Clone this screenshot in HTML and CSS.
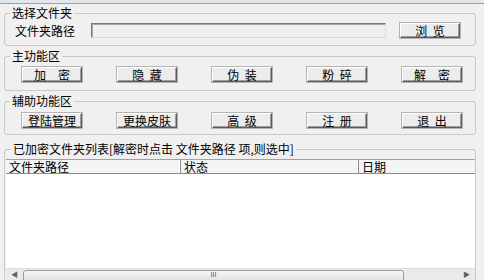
FILE: index.html
```html
<!DOCTYPE html>
<html lang="zh-CN">

<head>
    <meta charset="UTF-8">
    <meta name="viewport" content="width=device-width, initial-scale=1.0">
    <title>文件夹加密</title>
    <link rel="stylesheet" href="styles.css">
</head>

<body>
    <div class="frame-edge"></div>

    <fieldset class="group group-folder">
        <legend>选择文件夹</legend>
        <div class="path-row">
            <label for="path">文件夹路径</label>
            <input type="text" id="path" class="path-input" readonly>
            <button class="win-btn browse-btn">浏  览</button>
        </div>
    </fieldset>

    <fieldset class="group group-main">
        <legend>主功能区</legend>
        <div class="btn-row">
            <button class="win-btn">加　密</button>
            <button class="win-btn">隐  藏</button>
            <button class="win-btn">伪  装</button>
            <button class="win-btn">粉  碎</button>
            <button class="win-btn">解　密</button>
        </div>
    </fieldset>

    <fieldset class="group group-extra">
        <legend>辅助功能区</legend>
        <div class="btn-row">
            <button class="win-btn">登陆管理</button>
            <button class="win-btn">更换皮肤</button>
            <button class="win-btn">高  级</button>
            <button class="win-btn">注  册</button>
            <button class="win-btn">退  出</button>
        </div>
    </fieldset>

    <fieldset class="group group-list">
        <legend>已加密文件夹列表[解密时点击 文件夹路径 项,则选中]</legend>
        <div class="list-view">
            <div class="list-header">
                <div class="col col-path">文件夹路径</div>
                <div class="col col-state">状态</div>
                <div class="col col-date">日期</div>
            </div>
            <div class="list-body"></div>
            <div class="hscroll">
                <div class="arrow arrow-left">&#9664;</div>
                <div class="thumb"><span class="grip">III</span></div>
                <div class="track"></div>
                <div class="arrow arrow-right">&#9654;</div>
            </div>
        </div>
    </fieldset>
</body>

</html>
```

FILE: styles.css
```css
body {
    margin: 0;
    background-color: #f0f0f0;
    font-family: "Noto Sans CJK SC", "Liberation Sans", sans-serif;
    font-size: 12px;
    color: #000;
    overflow: hidden;
    height: 280px;
}

.frame-edge {
    height: 3px;
    background-color: #e3e6ec;
    border-bottom: 1px solid #a0a0a0;
}

.group {
    margin: 3px 8px 0 4px;
    padding: 0;
    border: 1px solid #c9c9c9;
    border-radius: 3px;
    min-width: 0;
}

.group legend {
    margin-left: 5px;
    padding: 0 2px;
    line-height: 14px;
    height: 14px;
}

.group-folder {
    margin-top: 2px;
    padding: 3px 0 7px;
}

.path-row {
    display: flex;
    align-items: center;
    height: 15px;
    padding-left: 10px;
}

.path-row label {
    width: 76px;
    line-height: 15px;
}

.path-input {
    width: 295px;
    height: 15px;
    box-sizing: border-box;
    margin: 0;
    padding: 0;
    background-color: #f0f0f0;
    border: 1px solid;
    border-color: #7a7a7a #dadada #dadada #7a7a7a;
    box-shadow: inset 1px 1px 0 #a8a8a8;
    outline: none;
}

.win-btn {
    width: 60px;
    height: 15px;
    margin: 0;
    padding: 0;
    box-sizing: border-box;
    background-color: #ececec;
    border: 1px solid;
    border-color: #ffffff #5a5a5a #5a5a5a #ffffff;
    box-shadow: inset -1px -1px 0 #a0a0a0, 0 0 0 1px #b4b4b4;
    font-family: "Noto Sans CJK SC", "Liberation Sans", sans-serif;
    font-size: 12px;
    line-height: 12px;
    color: #000;
    white-space: pre;
}

.browse-btn {
    margin-left: 14px;
}

.btn-row {
    display: grid;
    grid-template-columns: repeat(5, 60px);
    column-gap: 35px;
    padding-left: 17px;
}

.group-main {
    padding: 4px 0 8px;
}

.group-extra {
    padding: 5px 0 6px;
}

.group-list {
    margin-top: 7px;
    padding: 3px 0 0 1px;
}

.list-view {
    background-color: #fff;
}

.list-header {
    display: grid;
    grid-template-columns: 175px 178px 1fr;
    background-color: #f4f4f4;
    border-top: 1px solid #a0a0a0;
    border-bottom: 1px solid #8a8a8a;
    box-sizing: border-box;
    height: 15px;
}

.col {
    padding-left: 3px;
    line-height: 13px;
    border-right: 1px solid #8a8a8a;
    box-shadow: inset -1px 0 0 #fff;
}

.col-date {
    border-right: none;
    box-shadow: none;
}

.list-body {
    height: 94px;
}

.hscroll {
    display: flex;
    height: 17px;
    background-color: #eaeaea;
    border-top: 1px solid #dcdcdc;
}

.arrow {
    width: 17px;
    text-align: center;
    font-size: 7px;
    line-height: 11px;
    color: #606060;
}

.thumb {
    width: 381px;
    margin: 1px 0;
    box-sizing: border-box;
    border: 1px solid #9a9a9a;
    border-radius: 3px;
    background: linear-gradient(#f6f6f6, #dadada);
    text-align: center;
    font-family: "Liberation Sans", sans-serif;
    font-size: 7px;
    line-height: 8px;
    color: #555;
}

.track {
    flex: 1;
}
```
